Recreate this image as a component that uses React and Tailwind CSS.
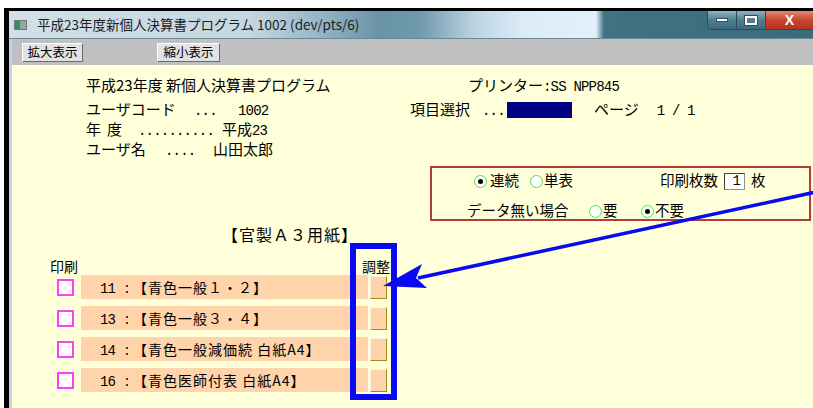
import React from "react";

const mono = "font-['Liberation_Mono',monospace] text-[14px] tracking-[-0.8px]";

function Radio({ on }) {
  return (
    <span className="inline-flex align-middle w-[13px] h-[13px] rounded-full border-[1.5px] border-[#45e845] bg-white items-center justify-center relative top-[-1px]">
      {on && <span className="w-[5px] h-[5px] rounded-full bg-black" />}
    </span>
  );
}

function Row({ num, label }) {
  return (
    <div className="flex items-center pl-[45px] h-[24px]">
      <span className="w-[17px] h-[17px] border-2 border-[#ff3cff] bg-white shrink-0" />
      <div className="ml-[7px] w-[287px] h-[24px] bg-[#ffd4aa] pl-[19px] text-[14px] leading-[24px] whitespace-nowrap">
        <span className={`${mono} inline-block w-[25px]`}>{num}</span>
        <span className="inline-block w-[8px]">:</span>
        <span className="tracking-[1px]">{label}</span>
      </div>
      <div className="ml-[2px] w-[17px] h-[23px] bg-[#ffd4aa] border border-t-[#fff4e8] border-l-[#fff4e8] border-r-[#a08c1c] border-b-[#a08c1c]" />
    </div>
  );
}

export default function App() {
  return (
    <div className="relative w-[813px] h-[408px] overflow-hidden bg-white pt-[8px] pl-[4px] font-['Noto_Sans_CJK_JP',sans-serif] text-black">
      <div className="h-full border-t-[3px] border-l-[5px] border-black flex flex-col">
        {/* Title bar */}
        <div className="h-[28px] shrink-0 flex bg-[linear-gradient(to_right,#d2dfe6_0%,#c5d7e0_30%,#98b9c9_38%,#6a93a7_46%,#6f99ac_51%,#bcd5e3_58%,#dcecf7_64%,#e2f0fa_73%,#3f7283_74%,#3a6c7d_100%)] border-b border-[#6a8a98]">
          <div className="flex items-center pl-[5px]">
            <span className="w-[13px] h-[10px] bg-[#9aa6a2] border border-[#6e7a76] flex">
              <span className="w-[5px] h-full bg-[#3f8a5a]" />
            </span>
            <span className="ml-[10px] text-[13.5px] text-[#1c1c1c] leading-none">
              平成23年度新個人決算書プログラム 1002 (dev/pts/6)
            </span>
          </div>
          <div className="ml-auto flex self-start h-[19px] rounded-bl-[5px] overflow-hidden border-l border-b border-[#2c4a55]">
            <div className="w-[29px] h-full bg-[linear-gradient(to_bottom,#8fb4c2,#4f7f8f_50%,#3d6b7b)] flex items-center justify-center border-r border-[#2c4a55]">
              <span className="w-[12px] h-[4px] bg-white border border-[#35505a]" />
            </div>
            <div className="w-[29px] h-full bg-[linear-gradient(to_bottom,#8fb4c2,#4f7f8f_50%,#3d6b7b)] flex items-center justify-center border-r border-[#2c4a55]">
              <span className="w-[12px] h-[9px] border-[2px] border-white outline outline-1 outline-[#35505a]" />
            </div>
            <div className="w-[47px] h-full bg-[linear-gradient(to_bottom,#e48a78,#c9452f_50%,#b53420)] flex items-center justify-center">
              <span className="text-white font-['Liberation_Sans',sans-serif] font-bold text-[14px] leading-none">X</span>
            </div>
          </div>
        </div>
        {/* Body */}
        <div className="flex-1 border-l-[3px] border-[#bcd3ea] flex flex-col">
          {/* Toolbar */}
          <div className="h-[26px] shrink-0 bg-[#c0c0c0] flex items-start pt-[4px] pl-[10px] text-[12.5px]">
            <div className="w-[61px] h-[19px] bg-[#e2e2e2] border border-t-white border-l-white border-r-[#6a6a6a] border-b-[#6a6a6a] flex items-center justify-center leading-none">
              拡大表示
            </div>
            <div className="ml-[74px] w-[63px] h-[19px] bg-[#e2e2e2] border border-t-white border-l-white border-r-[#6a6a6a] border-b-[#6a6a6a] flex items-center justify-center leading-none">
              縮小表示
            </div>
          </div>
          {/* Content */}
          <div className="flex-1 bg-[#ffffd9] flex flex-col pt-[10px] text-[15px]">
            <div className="h-[20px] leading-[20px] whitespace-nowrap">
              <span className="inline-block w-[398px] pl-[74px]">平成23年度 新個人決算書プログラム</span>
              <span className="inline-block pl-[58px]">
                プリンター<span className={mono}>:SS NPP845</span>
              </span>
            </div>
            <div className="h-[20px] leading-[20px] whitespace-nowrap mt-[4px]">
              <span className="inline-block w-[398px] pl-[74px]">
                <span className="inline-block w-[108px]">ユーザコード</span>
                <span className={`${mono} inline-block w-[44px]`}>...</span>
                <span className={mono}>1002</span>
              </span>
              <span className="inline-block w-[72px]">項目選択</span>
              <span className={`${mono} inline-block w-[25px]`}>...</span>
              <span className="inline-block align-middle relative top-[-1px] w-[65px] h-[16px] bg-[#000080]" />
              <span className="inline-block ml-[22px]">ページ</span>
              <span className={`${mono} inline-block ml-[18px] whitespace-pre`}>1 / 1</span>
            </div>
            <div className="h-[20px] leading-[20px] whitespace-nowrap pl-[74px]">
              <span className="inline-block w-[21px]">年</span>
              <span className="inline-block w-[31px]">度</span>
              <span className={`${mono} inline-block w-[84px]`}>..........</span>
              平成<span className={mono}>23</span>
            </div>
            <div className="h-[20px] leading-[20px] whitespace-nowrap pl-[74px]">
              <span className="inline-block w-[79px]">ユーザ名</span>
              <span className={`${mono} inline-block w-[48px]`}>....</span>
              山田太郎
            </div>

            {/* Red options box */}
            <div className="mt-[7px] ml-[418px] w-[381px] h-[55px] border-2 border-[#b03c3c] pt-[3px] text-[14.5px]">
              <div className="h-[18px] leading-[18px] whitespace-nowrap">
                <span className="inline-block w-[228px] pl-[42px]">
                  <Radio on />
                  <span className="ml-[3px]">連続</span>
                  <span className="inline-block w-[11px]" />
                  <Radio />
                  <span className="ml-[1px]">単表</span>
                </span>
                印刷枚数
                <span className="inline-flex align-middle relative top-[-1px] ml-[6px] w-[21px] h-[17px] bg-white border border-t-[#404040] border-l-[#404040] border-r-[#909090] border-b-[#909090] items-center justify-end pr-[4px] leading-none">
                  <span className={mono}>1</span>
                </span>
                <span className="ml-[6px]">枚</span>
              </div>
              <div className="h-[18px] leading-[18px] whitespace-nowrap mt-[12px] pl-[35px]">
                <span className="inline-block w-[122px]">データ無い場合</span>
                <Radio />
                <span className="inline-block ml-[1px] w-[38px]">要</span>
                <Radio on />
                <span className="ml-[1px]">不要</span>
              </div>
            </div>

            <div className="mt-[3px] h-[20px] leading-[20px] pl-[210px] text-[16px] tracking-[1px] whitespace-nowrap">【官製Ａ３用紙】</div>

            <div className="mt-[14px] h-[17px] leading-[17px] text-[14px] whitespace-nowrap">
              <span className="inline-block ml-[38px] w-[312px]">印刷</span>
              調整
            </div>

            <div className="flex flex-col gap-[7px]">
              <Row num="11" label="【青色一般１・２】" />
              <Row num="13" label="【青色一般３・４】" />
              <Row num="14" label="【青色一般減価続 白紙A4】" />
              <Row num="16" label="【青色医師付表 白紙A4】" />
            </div>
          </div>
        </div>
      </div>

      {/* Annotation overlays */}
      <div className="absolute left-[350px] top-[243px] w-[47px] h-[157px] border-[6px] border-[#0a0af0]" />
      <svg className="absolute left-0 top-0 pointer-events-none" width="813" height="408" viewBox="0 0 813 408">
        <line x1="418" y1="278" x2="816" y2="192" stroke="#0a0af0" strokeWidth="3.5" />
        <polygon points="383,286 422,264 416,278 427,288" fill="#0a0af0" />
      </svg>
    </div>
  );
}
